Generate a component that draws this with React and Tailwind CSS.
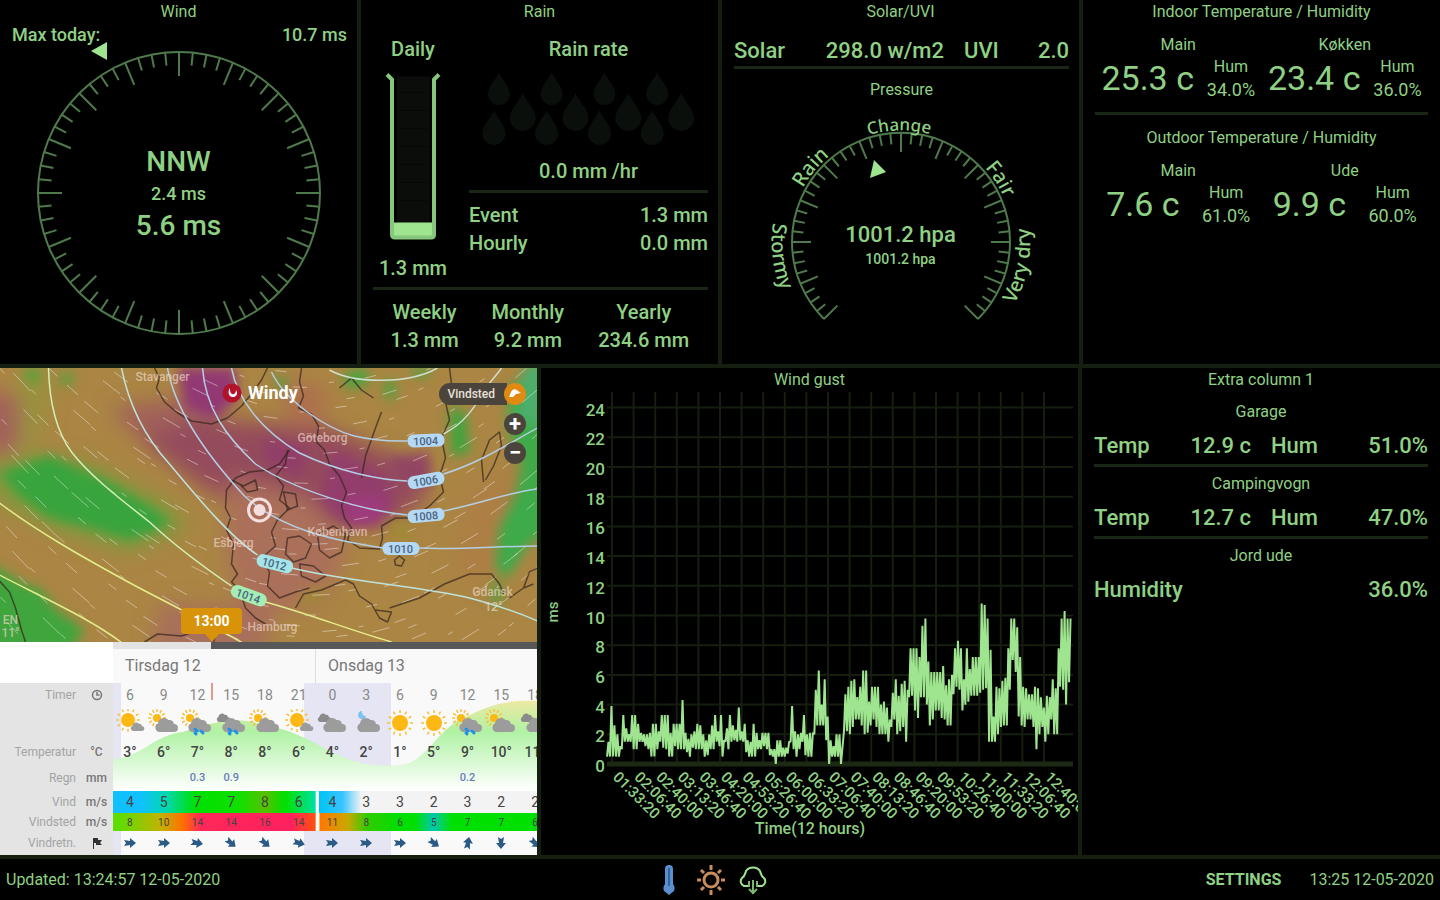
import { useId } from 'react'
import clsx from 'clsx'

const LINE = '#4f7a4b'
const BRIGHT = '#9fe48f'

const rainTotals = [
  { label: 'Weekly', value: '1.3 mm' },
  { label: 'Monthly', value: '9.2 mm' },
  { label: 'Yearly', value: '234.6 mm' },
]

const indoor = [
  { name: 'Main', temp: '25.3 c', hum: '34.0%' },
  { name: 'Køkken', temp: '23.4 c', hum: '36.0%' },
]

const outdoor = [
  { name: 'Main', temp: '7.6 c', hum: '61.0%' },
  { name: 'Ude', temp: '9.9 c', hum: '60.0%' },
]

// [low, high] gust in ms, one pair for every sample slot
const gusts = [
  [0.5, 1.5], [0.5, 3.9], [0.5, 2.6], [0.5, 2], [0.5, 1.2], [1, 3.3], [1.5, 2.4], [1.5, 2], [1.5, 3.3], [1, 3.3],
  [1, 2.7], [1.5, 2.1], [1.5, 2], [1.2, 2], [1, 2.1], [0.5, 2.7], [0.5, 2.7], [1, 2.2], [1.5, 3.3], [1.1, 3.3],
  [1, 3.3], [0.5, 2.1], [0.5, 2.7], [1.2, 2.7], [1, 2.7], [1, 4.3], [1, 2.1], [0.8, 1.7], [0.5, 2], [1.1, 2.2],
  [1, 2.7], [1, 2.6], [1, 2], [0.5, 1.6], [0.6, 2], [1, 2.6], [1, 3.3], [1.5, 2.2], [1.2, 3.3], [0.5, 1.6],
  [1.5, 2.4], [1, 3.3], [1.5, 2.6], [1.6, 2.3], [1.5, 3.8], [1.6, 2.2], [1.5, 2.7], [0.8, 1.6], [0.5, 1.5], [0.5, 2.7],
  [0.5, 2.1], [1, 1.6], [1, 2.1], [1.2, 2.1], [1, 2.1], [0.6, 1], [0.5, 1], [0, 1.6], [0.5, 1.6], [0.5, 1.1],
  [0.5, 1.1], [0.7, 1.5], [1.5, 3.9], [1, 2.2], [0.5, 2], [1, 2.1], [1.5, 3.3], [0.6, 2], [0.5, 2.1], [0.5, 2.1],
  [2, 5], [2.6, 6.3], [2.6, 4], [2.6, 5.7], [1.6, 3.2], [0, 1.6], [0.5, 1.2], [0.5, 2], [0.5, 2], [0, 1.1],
  [2.2, 4.7], [2.2, 5.2], [2, 5.6], [2.5, 5.7], [3, 4.5], [3, 5.2], [2.6, 6.3], [2, 6.3], [2.1, 4.2], [2.6, 5.2],
  [3, 5.2], [2.5, 5.2], [2, 4], [2, 4.2], [2, 3.8], [1.5, 3], [2.5, 4.8], [3, 5.7], [2, 4.6], [2.2, 5.4],
  [2.5, 5.6], [1.5, 5], [4.5, 7.8], [4.6, 7.8], [3.6, 7.8], [3.1, 7.2], [4.5, 9.3], [4.5, 9.8], [4, 6.9], [2.6, 6.2],
  [3, 6.2], [3.6, 6.2], [3.6, 6.2], [3.1, 6.6], [3, 5.3], [2.6, 5.7], [2.6, 6], [4.7, 7.8], [5.2, 8.3], [5, 7.8],
  [3.6, 5.7], [4, 7.8], [4.2, 6.4], [4.6, 7.2], [4.6, 7.2], [4.6, 7.2], [4.8, 10.8], [5, 10.7], [5.1, 9.8], [1.5, 7.7],
  [1.5, 3.2], [1.5, 5.2], [2, 5.1], [2.5, 5.6], [2.6, 5.8], [2.6, 7.8], [5, 9.8], [7, 9.8], [6.2, 9.2], [3.2, 7.2],
  [2.6, 5.2], [2.5, 5.1], [3, 4.7], [3, 4.7], [2.5, 5.2], [1, 5.1], [2, 4.5], [2.5, 3.8], [1.5, 4.6], [2, 4.5],
  [3, 5.7], [2, 5.1], [2, 7.8], [5.2, 9.8], [5, 10.3], [4, 9.8], [5.5, 9.8],
]

const forecast = [
  { hour: 6, icon: 'sunny', temp: '3°', rain: '', wind: 4, gust: 8, dir: 0 },
  { hour: 9, icon: 'partly', temp: '6°', rain: '', wind: 5, gust: 10, dir: 0 },
  { hour: 12, icon: 'showers', temp: '7°', rain: '0.3', wind: 7, gust: 14, dir: 10 },
  { hour: 15, icon: 'rain', temp: '8°', rain: '0.9', wind: 7, gust: 14, dir: 40 },
  { hour: 18, icon: 'partly', temp: '8°', rain: '', wind: 8, gust: 16, dir: 40 },
  { hour: 21, icon: 'sunny', temp: '6°', rain: '', wind: 6, gust: 14, dir: 15 },
  { hour: 0, icon: 'cloudy', temp: '4°', rain: '', wind: 4, gust: 11, dir: 0 },
  { hour: 3, icon: 'night', temp: '2°', rain: '', wind: 3, gust: 8, dir: 0 },
  { hour: 6, icon: 'sun', temp: '1°', rain: '', wind: 3, gust: 6, dir: 0 },
  { hour: 9, icon: 'sun', temp: '5°', rain: '', wind: 2, gust: 5, dir: 35 },
  { hour: 12, icon: 'showers', temp: '9°', rain: '0.2', wind: 3, gust: 7, dir: 280 },
  { hour: 15, icon: 'partly', temp: '10°', rain: '', wind: 2, gust: 7, dir: 90 },
  { hour: 18, icon: 'cloudy', temp: '11°', rain: '', wind: 2, gust: 6, dir: 45 },
]

function Panel({ title, className, children }) {
  return (
    <section className={clsx('min-w-0 overflow-hidden bg-black', className)}>
      <h2 className="text-center text-[16px] leading-6 font-normal">{title}</h2>
      {children}
    </section>
  )
}

function Rule({ className }) {
  return <hr className={clsx('h-[3px] border-0 bg-[#1a2716]', className)} />
}

function ticks(from, to, radius, minor, major) {
  const out = []
  for (let i = from; i <= to; i++) {
    const len = i % 4 === 0 ? major : minor
    out.push(<line key={i} y1={-radius} y2={-radius + len} transform={`rotate(${i * 5.625})`} />)
  }
  return out
}

function WindPanel() {
  return (
    <Panel title="Wind">
      <div className="flex justify-between pr-[10px] pl-3 text-[18px] leading-[22px]">
        <span>Max today:</span>
        <span>10.7 ms</span>
      </div>
      <div className="relative">
        <svg viewBox="-150 -147 300 296" className="mx-auto block h-[296px] w-[300px] overflow-visible" fill="none" stroke={LINE} strokeWidth="2">
          <circle r="141" />
          {ticks(0, 63, 141, 13, 24)}
          <path d="M-88 -142 L-72 -151 V-133 Z" fill={BRIGHT} stroke="none" />
        </svg>
        <div className="absolute inset-0 flex flex-col items-center justify-center leading-8">
          <span className="text-[28px]">NNW</span>
          <span className="text-[18px]">2.4 ms</span>
          <span className="text-[28px]">5.6 ms</span>
        </div>
      </div>
    </Panel>
  )
}

function Drop({ x, y, w, h }) {
  const r = w / 2
  const b = y + h - r
  return <path d={`M${x} ${y} C${x + 2} ${y + 6} ${x + r} ${b - 8} ${x + r} ${b} A${r} ${r} 0 0 1 ${x - r} ${b} C${x - r} ${b - 8} ${x - 2} ${y + 6} ${x} ${y} Z`} />
}

function RainPanel() {
  return (
    <Panel title="Rain" className="text-[20px]">
      <div className="pr-[10px] pl-3">
        <div className="flex gap-4 pt-3">
          <div className="w-20 shrink-0 text-center leading-[26px]">
            <div>Daily</div>
            <svg viewBox="0 0 80 192" className="block h-[193px] w-20">
              <rect x="24" y="14" width="33" height="150" fill="#0a0d0a" />
              <path d="M27 30H55M27 48H55M27 66H55M27 84H55M27 102H55M27 120H55M27 138H55" stroke="#060806" />
              <rect x="19" y="160" width="43" height="14" fill={BRIGHT} />
              <path d="M14 12 L19 17 V172 Q19 175 22 175 H58 Q61 175 61 172 V17 L66 12" fill="none" stroke="#86c77d" strokeWidth="4" />
            </svg>
            <div>1.3 mm</div>
          </div>
          <div className="flex-1">
            <div className="text-center leading-[26px]">Rain rate</div>
            <svg viewBox="0 0 240 96" className="block h-24 w-full" fill="#0b0f0b">
              {[0, 1, 2, 3].map((i) => (
                <g key={i}>
                  <Drop x={30 + i * 53} y={10} w={22} h={33} />
                  <Drop x={54 + i * 53} y={31} w={26} h={38} />
                  <Drop x={25 + i * 53} y={48} w={23} h={35} />
                </g>
              ))}
            </svg>
            <div className="text-center leading-[26px]">0.0 mm /hr</div>
            <Rule className="mt-[6px] mb-2" />
            <div className="flex justify-between leading-7">
              <span>Event</span>
              <span>1.3 mm</span>
            </div>
            <div className="flex justify-between leading-7">
              <span>Hourly</span>
              <span>0.0 mm</span>
            </div>
          </div>
        </div>
        <Rule className="mt-[6px] mb-2" />
        <table className="w-full text-center leading-7">
          <thead>
            <tr>
              {rainTotals.map((t) => (
                <th key={t.label} className="p-0 font-medium">{t.label}</th>
              ))}
            </tr>
          </thead>
          <tbody>
            <tr>
              {rainTotals.map((t) => (
                <td key={t.label} className="px-3">{t.value}</td>
              ))}
            </tr>
          </tbody>
        </table>
      </div>
    </Panel>
  )
}

function SolarPanel() {
  const id = useId()
  return (
    <Panel title="Solar/UVI">
      <div className="pt-3 pr-[10px] pl-3">
        <div className="grid grid-cols-[2fr_1fr] gap-5 text-[22px] leading-[30px]">
          <div className="flex justify-between"><span>Solar</span><span>298.0 w/m2</span></div>
          <div className="flex justify-between"><span>UVI</span><span>2.0</span></div>
        </div>
        <Rule />
        <h3 className="pt-[9px] text-center text-[16px] leading-6 font-normal">Pressure</h3>
      </div>
      <div className="relative">
        <svg viewBox="-150 -140 300 240" className="mx-auto block h-[240px] w-[300px] overflow-visible">
          <defs>
            <path id={`${id}change`} d="M-79 -79 A112 112 0 0 1 79 -79" />
            <path id={`${id}upper`} d="M-112 0 A112 112 0 0 1 112 0" />
            <path id={`${id}left`} d="M-112 -65 A130 130 0 0 0 -65 112" />
            <path id={`${id}right`} d="M65 112 A130 130 0 0 0 112 -65" />
          </defs>
          <g fill="none" stroke={LINE} strokeWidth="2">
            <path d="M-77 77 A109 109 0 1 1 77 77" />
            {ticks(-24, 24, 109, 11, 19)}
          </g>
          <path d="M-27 -82 L-15 -70 L-31 -64 Z" fill={BRIGHT} />
          <g fill="#8fd184" fontFamily="Noto Sans" fontSize="20" textAnchor="middle">
            <text fontSize="17"><textPath href={`#${id}change`} startOffset="49%">Change</textPath></text>
            <text><textPath href={`#${id}upper`} startOffset="22%">Rain</textPath></text>
            <text><textPath href={`#${id}upper`} startOffset="82%">Fair</textPath></text>
            <text><textPath href={`#${id}left`} startOffset="41%">Stormy</textPath></text>
            <text><textPath href={`#${id}right`} startOffset="54%">Very dry</textPath></text>
          </g>
        </svg>
        <div className="absolute inset-0 flex flex-col items-center justify-center pt-[50px] leading-6">
          <span className="text-[22px]">1001.2 hpa</span>
          <span className="text-[14px]">1001.2 hpa</span>
        </div>
      </div>
    </Panel>
  )
}

function Sensors({ items }) {
  return (
    <div className="grid grid-cols-2 px-3 pt-[11px]">
      {items.map((s) => (
        <div key={s.name}>
          <h3 className="text-center text-[16px] leading-5 font-normal">{s.name}</h3>
          <div className="flex items-center justify-around">
            <span className="text-[34px] leading-[46px] font-normal">{s.temp}</span>
            <div className="text-center leading-[23px]">
              <div className="text-[16px] font-normal">Hum</div>
              <div className="text-[18px] font-normal">{s.hum}</div>
            </div>
          </div>
        </div>
      ))}
    </div>
  )
}

function TemperaturePanel() {
  return (
    <Panel title="Indoor Temperature / Humidity">
      <Sensors items={indoor} />
      <Rule className="mx-3 my-[11px]" />
      <h2 className="text-center text-[16px] leading-6 font-normal">Outdoor Temperature / Humidity</h2>
      <Sensors items={outdoor} />
    </Panel>
  )
}

function ExtraRow({ name, children, last }) {
  return (
    <div className="pt-[5px]">
      <h3 className="text-center text-[16px] leading-6 font-normal">{name}</h3>
      <div className="mb-[2px] grid auto-cols-fr grid-flow-col gap-5 pt-[6px] text-[22px] leading-8">{children}</div>
      {!last && <Rule />}
    </div>
  )
}

function Reading({ label, value }) {
  return (
    <div className="flex justify-between">
      <span>{label}</span>
      <span>{value}</span>
    </div>
  )
}

function ExtraPanel() {
  return (
    <Panel title="Extra column 1">
      <div className="px-3 pt-[3px]">
        <ExtraRow name="Garage">
          <Reading label="Temp" value="12.9 c" />
          <Reading label="Hum" value="51.0%" />
        </ExtraRow>
        <ExtraRow name="Campingvogn">
          <Reading label="Temp" value="12.7 c" />
          <Reading label="Hum" value="47.0%" />
        </ExtraRow>
        <ExtraRow name="Jord ude" last>
          <Reading label="Humidity" value="36.0%" />
        </ExtraRow>
      </div>
    </Panel>
  )
}

function clock(seconds) {
  const parts = [Math.floor(seconds / 3600), Math.floor(seconds / 60) % 60, seconds % 60]
  return parts.map((n) => String(n).padStart(2, '0')).join(':')
}

function GustPanel() {
  const y = (v) => 372 - v * 14.85
  const step = 465 / gusts.length
  const points = gusts.map(([lo, hi], i) => `${66 + i * step},${y(lo)} ${66 + (i + 0.5) * step},${y(hi)}`).join(' ')
  const cols = Array.from({ length: 21 }, (_, i) => i)
  const rows = Array.from({ length: 13 }, (_, i) => i * 2)

  return (
    <Panel title="Wind gust">
      <svg viewBox="0 0 537 460" className="block w-full" fill="#8fd184" fontSize="16">
        <g stroke="#151e0f" strokeWidth="2">
          {cols.map((i) => (
            <line key={i} x1={71 + i * 21.6} x2={71 + i * 21.6} y1="0" y2="372" />
          ))}
          {rows.slice(1).map((v) => (
            <line key={v} x1="66" x2="532" y1={y(v)} y2={y(v)} />
          ))}
        </g>
        <line x1="66" x2="532" y1="372" y2="372" stroke="#1c2914" strokeWidth="5" />
        {rows.map((v) => (
          <text key={v} x="64" y={y(v) + 8} textAnchor="end" fontSize="17">{v}</text>
        ))}
        {cols.map((i) => (
          <text key={i} transform={`translate(${71 + i * 21.6} 386) rotate(45)`} fontSize="15">{clock(5600 + i * 2000)}</text>
        ))}
        <polyline points={points} fill="none" stroke={BRIGHT} strokeWidth="2" strokeLinejoin="bevel" />
        <text transform="translate(17 220) rotate(-90)" textAnchor="middle" fontSize="15">ms</text>
        <text x="269" y="442" textAnchor="middle">Time(12 hours)</text>
      </svg>
    </Panel>
  )
}

const isobars = [
  { color: '#d3f0b4', d: 'M49 0 C50 40 58 65 72 84 C92 110 130 138 150 154 C180 182 210 203 232 218' },
  { color: '#e3ec8c', d: 'M266 234 C310 246 350 262 392 274' },
  { color: '#e3ec8c', d: 'M0 135 C40 165 85 190 125 212 C150 226 200 250 245 276' },
  { color: '#e3ec8c', d: 'M0 207 C40 228 90 250 124 276' },
  { color: '#bfe3da', d: 'M122 0 C130 40 148 72 170 96 C200 132 230 168 258 187' },
  { color: '#bfe3da', d: 'M292 200 C350 214 420 218 470 230 C500 238 520 245 538 253' },
  { color: '#b4cfe4', d: 'M168 0 C176 45 210 90 245 128 C280 160 330 172 384 180' },
  { color: '#b4cfe4', d: 'M418 180 C460 182 500 178 538 178' },
  { color: '#b4cfe4', d: 'M203 0 C206 40 226 68 256 96 C295 122 360 142 408 147' },
  { color: '#b4cfe4', d: 'M444 143 C480 136 510 124 538 121' },
  { color: '#b4cfe4', d: 'M232 0 C238 32 262 62 300 85 C340 104 380 112 408 113' },
  { color: '#b4cfe4', d: 'M444 106 C480 95 510 75 538 60' },
  { color: '#b4cfe4', d: 'M272 4 C285 32 325 60 355 68 C380 74 395 73 408 73' },
  { color: '#cfe0d0', d: 'M444 66 C465 55 475 40 485 22 C492 12 498 6 502 0' },
  { color: '#cfe0d0', d: 'M330 2 C355 16 410 16 438 0' },
]

const isobarLabels = [
  { x: 426, y: 72, r: -2, text: '1004' },
  { x: 426, y: 112, r: -10, text: '1006' },
  { x: 426, y: 147, r: -5, text: '1008' },
  { x: 401, y: 180, r: 0, text: '1010' },
  { x: 275, y: 195, r: 14, text: '1012', fill: '#a5e5e8' },
  { x: 249, y: 227, r: 20, text: '1014', fill: '#a5edb4' },
]

const coasts = [
  'M155 0 L160 10 157 20 165 34 178 45 192 53 212 56 228 50 242 38 252 26 262 12 268 0',
  'M302 0 L300 14 304 28 299 40 312 46 319 58 317 74 325 82 330 96 340 108 347 124 342 138 345 150 352 160 348 172 360 180 380 181 383 170 382 158 396 150 412 150 430 138 444 124 440 108 446 90 442 70 450 52 446 34 452 16 450 0',
  'M290 82 L280 96 268 102 250 104 236 110 227 122 226 140 231 150 227 162 234 176 232 196 238 206 232 214 240 222 246 240 256 250 266 256',
  'M288 82 L286 96 276 108 284 118 280 132 290 140 278 152 272 164 276 178 262 190 270 204 268 218 280 230 296 224 310 220',
  'M232 112 L244 118 256 112 258 122 248 124 240 116',
  'M288 170 L300 168 312 176 306 190 294 194 286 186 Z',
  'M318 166 L334 158 346 166 342 184 330 190 320 182 Z',
  'M300 196 L314 198 326 208 316 214 302 208 Z',
  'M284 124 L296 126 298 138 288 142 Z',
  'M296 240 L304 226 322 222 346 212 354 216 360 228 372 236 380 250 388 254 392 244 376 242',
  'M390 240 L420 230 445 216 470 206 492 206 500 216 504 226',
  'M510 230 L524 220 530 204 538 200 M524 220 L534 216',
  'M484 114 L482 92 490 72 500 64 502 78 494 98 486 112',
  'M362 110 L366 88 376 60 382 44 M340 20 L352 10 362 22 374 30',
  'M145 274 L158 266 182 268 200 262 216 268 214 274',
  'M0 213 L10 224 16 240 22 262 26 274',
  'M395 192 L400 188 405 192 402 198 396 197 Z',
]

const places = [
  { x: 163, y: 13, text: 'Stavanger' },
  { x: 323, y: 74, text: 'Göteborg' },
  { x: 338, y: 168, text: 'København' },
  { x: 234, y: 179, text: 'Esbjerg' },
  { x: 273, y: 263, text: 'Hamburg' },
  { x: 493, y: 228, text: 'Gdańsk' },
  { x: 494, y: 243, text: '12°' },
  { x: 11, y: 256, text: 'EN' },
  { x: 11, y: 269, text: '11°' },
]

// wind particles drifting along the flow
const streaks = Array.from({ length: 230 }, (_, i) => {
  const x = (i * 137.5) % 538
  const y = (i * 71.3 + (i % 7) * 19) % 274
  const slope = x < 250 ? 1.1 - x / 320 : 0.2 - (x - 250) / 260
  const len = 5 + (i % 5) * 3
  return `M${x.toFixed(1)} ${y.toFixed(1)} l${len} ${(len * slope).toFixed(1)}`
}).join(' ')

function WindMap() {
  const id = useId()
  return (
    <svg viewBox="0 0 538 274" preserveAspectRatio="xMidYMid slice" className="block h-[274px] w-full">
      <defs>
        <filter id={`${id}soft`} x="-50%" y="-50%" width="200%" height="200%">
          <feGaussianBlur stdDeviation="10" />
        </filter>
        <filter id={`${id}tight`} x="-50%" y="-50%" width="200%" height="200%">
          <feGaussianBlur stdDeviation="6" />
        </filter>
      </defs>
      <rect width="538" height="274" fill="#aa8543" />
      <g filter={`url(#${id}soft)`}>
        <path d="M-20 20 L20 30 28 70 0 90 -20 80 Z" fill="#a2605a" />
        <path d="M110 40 L180 30 240 60 250 130 200 115 150 80 Z" fill="#a0605a" />
        <path d="M140 70 L200 50 330 60 400 90 430 130 380 160 250 150 190 110 Z" fill="#944b5c" />
        <path d="M230 110 L310 130 350 180 320 240 240 240 225 170 Z" fill="#ab705a" />
        <path d="M160 235 L280 240 260 290 150 290 Z" fill="#a8705a" />
        <path d="M280 10 L330 20 320 60 290 60 Z" fill="#ad6f4e" />
        <path d="M-10 95 L40 85 90 95 170 135 190 160 130 185 60 165 -10 130 Z" fill="#83983c" />
        <path d="M20 0 L50 0 45 60 20 90 Z" fill="#99923d" />
        <path d="M470 120 L538 90 538 160 490 220 450 200 Z" fill="#ad7f45" />
      </g>
      <g filter={`url(#${id}tight)`}>
        <path d="M0 105 L50 88 105 112 150 138 172 155 150 165 130 172 90 160 50 150 20 128 Z" fill="#37a43c" />
        <path d="M-10 195 L22 215 42 222 55 240 85 262 70 285 -10 285 Z" fill="#3fa53c" />
        <path d="M178 0 L236 0 238 30 215 52 185 40 Z" fill="#923773" />
        <path d="M335 82 L388 110 395 140 350 160 320 130 Z" fill="#933c6c" />
        <path d="M345 128 L388 130 380 155 352 158 Z" fill="#9e3a7e" />
        <path d="M262 70 L310 80 300 110 268 95 Z" fill="#913d69" />
        <path d="M388 90 L430 84 432 120 400 118 Z" fill="#914464" />
        <path d="M545 -10 L510 20 508 60 522 95 515 130 500 160 496 200 508 210 530 175 545 170 Z" fill="#3cab4a" />
        <path d="M545 -10 L524 0 516 50 545 60 Z" fill="#4cae6c" />
        <path d="M450 38 L466 45 470 85 452 88 Z" fill="#3da53c" />
        <path d="M60 5 L75 5 72 18 60 16 Z M25 0 H40 V15 H28 Z" fill="#5ba03a" />
        <path d="M344 6 L368 0 368 18 346 20 Z M384 14 L396 12 394 34 386 28 Z M412 0 H430 V8 H412 Z" fill="#42a63c" />
        <path d="M276 8 L288 12 286 22 276 16 Z M492 214 L502 216 500 238 494 238 Z" fill="#42a63c" />
        <path d="M388 155 L410 152 412 172 392 172 Z M300 225 L330 218 320 236 300 238 Z" fill="#a08a35" />
      </g>
      <path d={streaks} stroke="#fff" strokeOpacity="0.42" fill="none" />
      <g fill="none" stroke="#35241d" strokeOpacity="0.7" strokeWidth="1.5" strokeLinejoin="round">
        {coasts.map((d) => <path key={d} d={d} />)}
      </g>
      <g fill="none" strokeWidth="1.5">
        {isobars.map((b) => <path key={b.d} d={b.d} stroke={b.color} />)}
      </g>
      <g fill="#f3dcd2" fillOpacity="0.65" fontSize="12" textAnchor="middle">
        {places.map((p) => <text key={p.text} x={p.x} y={p.y}>{p.text}</text>)}
      </g>
      {isobarLabels.map((l) => (
        <g key={l.text} transform={`translate(${l.x} ${l.y}) rotate(${l.r})`}>
          <rect x="-18" y="-6" width="37" height="13" rx="6" fill={l.fill || '#b5d8f5'} />
          <text y="5" fontSize="11" textAnchor="middle" fill="#4a6480">{l.text}</text>
        </g>
      ))}
      <circle cx="260" cy="142" r="11" fill="none" stroke="#f4dede" strokeWidth="3" />
      <circle cx="260" cy="142" r="6" fill="#f4dede" />
    </svg>
  )
}

function Sun({ x, y, r }) {
  const rays = Array.from({ length: 12 }, (_, i) => i * 30)
  return (
    <g transform={`translate(${x} ${y})`}>
      <circle r={r} fill="#fdb813" />
      {rays.map((a) => (
        <line key={a} y1={-r - 2} y2={-r - 5} transform={`rotate(${a})`} stroke="#fbbf3c" strokeWidth="1.5" />
      ))}
    </g>
  )
}

function Cloud({ x, y, s = 1, fill = '#9c9c9c' }) {
  return (
    <path
      transform={`translate(${x} ${y}) scale(${s})`}
      d="M5 15 A4.5 4.5 0 0 1 4 6.500 A6 6 0 0 1 14.500 3 A5 5 0 0 1 20 7 A4 4 0 0 1 20 15 Z"
      fill={fill}
    />
  )
}

function WeatherIcon({ kind }) {
  const wet = kind === 'showers' || kind === 'rain'
  return (
    <svg viewBox="0 0 32 28" className="mx-auto block h-7 w-8">
      {kind === 'sun' && <Sun x={16} y={14} r={8} />}
      {kind === 'sunny' && <><Sun x={14} y={11} r={7} /><Cloud x={16} y={13} s={0.6} /></>}
      {(kind === 'partly' || kind === 'showers') && <Sun x={9} y={9} r={4} />}
      {(kind === 'cloudy' || kind === 'rain') && <Cloud x={1} y={4} s={0.6} fill="#8b8b8b" />}
      {kind === 'night' && <path d="M12 2 A4 4 0 1 0 16 7 A4 4 0 0 1 12 2 Z" fill="#7cc4ee" />}
      {kind !== 'sun' && kind !== 'sunny' && <Cloud x={6} y={8} />}
      {wet && <path d="M14 20 l2 2 M20 22 l2 2 M14 24 l1 1" stroke="#1e90e8" strokeWidth="3" strokeLinecap="round" />}
    </svg>
  )
}

function Row({ label, unit, className, cell, render }) {
  return (
    <tr className={className}>
      <th scope="row" className="bg-[#e4e4e4] p-0 font-normal text-[#a3a3a3]">
        <div className="flex items-center text-[12px]">
          <span className="w-[76px] text-right">{label}</span>
          <span className="flex w-[37px] justify-center pl-1 font-medium text-[#777]">{unit}</span>
        </div>
      </th>
      {forecast.map((f, i) => (
        <td key={i} className={clsx('p-0 text-center', cell)}>{render(f)}</td>
      ))}
    </tr>
  )
}

function Forecast() {
  const id = useId()
  return (
    <div className="relative flex-1 overflow-hidden bg-[#f9f9f9] text-[#444]">
      <div className="flex h-[7px]">
        <div className="w-[113px] bg-white" />
        <div className="w-[98px] bg-[#e3e3e3]" />
        <div className="flex-1 bg-[#58585a]" />
      </div>
      <svg viewBox="0 0 425 172" className="absolute top-[41px] left-[113px] h-[172px] w-[425px]" fill="none">
        <defs>
          <linearGradient id={`${id}t`} x1="0" y1="18" x2="0" y2="106" gradientUnits="userSpaceOnUse">
            <stop offset="0" stopColor="#ece9a2" />
            <stop offset="0.35" stopColor="#b0f2a4" />
            <stop offset="1" stopColor="#fdfffd" />
          </linearGradient>
        </defs>
        <path d="M0 0H8V172H0ZM191 0H278V172H191Z" fill="#e5e5f3" />
        <path d="M0 76 C30 74 40 52 70 49 C95 40 120 34 145 40 C185 48 200 60 225 72 C250 84 280 85 297 80 C320 68 330 40 357 32 C380 20 400 17 425 18 V109 H0 Z" fill={`url(#${id}t)`} />
        <path d="M99 0V17" stroke="#d9534f" strokeOpacity="0.6" strokeWidth="2" />
      </svg>
      <table className="relative w-[552px] table-fixed border-collapse text-[14px]">
        <colgroup>
          <col className="w-[113px]" />
          {forecast.map((f, i) => <col key={i} />)}
        </colgroup>
        <thead>
          <tr className="h-[34px] text-left text-[16px] text-[#777]">
            <td className="bg-white p-0" />
            <th colSpan="6" scope="colgroup" className="border-r border-[#ddd] p-0 pl-3 font-normal">Tirsdag 12</th>
            <th colSpan="7" scope="colgroup" className="p-0 pl-3 font-normal">Onsdag 13</th>
          </tr>
        </thead>
        <tbody>
          <Row
            label="Timer"
            unit={
              <svg viewBox="0 0 12 12" className="size-3" fill="none" stroke="#777" strokeWidth="1.5"><circle cx="6" cy="6" r="4.500" /><path d="M6 3V6H8.500" /></svg>
            }
            className="h-6 font-normal text-[#888]"
            render={(f) => f.hour}
          />
          <Row className="h-8" render={(f) => <WeatherIcon kind={f.icon} />} />
          <Row label="Temperatur" unit="°C" className="h-[26px]" render={(f) => f.temp} />
          <Row label="Regn" unit="mm" className="h-[26px]" cell="text-[11px] text-[#6a7bbb]" render={(f) => f.rain} />
          <Row
            label="Vind"
            unit="m/s"
            className="h-[22px] bg-[linear-gradient(90deg,#10c0ff_120px,#10c0ff_140px,#00d8b0_166px,#00e000_196px,#10e000_240px,#58c000_265px,#00e000_285px,#00e0a0_315px,#fff_316px,#fff_318px,#00c4f4_319px,#38c4ff_342px,#f3f3f3_362px)]"
            cell="font-normal"
            render={(f) => f.wind}
          />
          <Row
            label="Vindsted"
            unit="m/s"
            className="h-[17px] bg-[linear-gradient(90deg,#60dc00_120px,#c0b400_160px,#ff7000_182px,#ff2858_200px,#ff2060_290px,#ff5010_315px,#fff_316px,#fff_318px,#ff7800_320px,#c8a800_348px,#30cc00_368px,#00e000_400px,#00e000_415px,#00c8b0_433px,#00e000_452px)]"
            cell="text-[10px] leading-[17px] font-normal"
            render={(f) => f.gust}
          />
          <Row
            label="Vindretn."
            unit={
              <svg viewBox="0 0 12 12" className="size-3"><path d="M2 1H7V3H11L9 6L11 8H5V6H3V12H2Z" fill="#333" /></svg>
            }
            className="h-6"
            render={(f) => (
              <svg viewBox="0 0 14 14" className="mx-auto block size-[14px]">
                <path d="M1 4 L3 7 L1 10 L7 9 V12 L13 7 L7 2 V5 Z" transform={`rotate(${f.dir} 7 7)`} fill="#2b5a85" />
              </svg>
            )}
          />
        </tbody>
      </table>
    </div>
  )
}

function MapPanel() {
  return (
    <section className="flex min-w-0 flex-col overflow-hidden bg-black">
      <div className="relative">
        <WindMap />
        <a href="#windy" className="absolute top-[14px] left-[222px] flex items-center gap-[6px] text-[18px] leading-[22px] font-bold text-white">
          <svg viewBox="0 0 20 20" className="size-5">
            <circle cx="10" cy="10" r="9.500" fill="#b3122b" />
            <path d="M8 5 C5 9 7 15 12 14 C15 13 16 10 14 7 C14 10 12 12 10 11 C8 10 8 8 8 5 Z" fill="#fff" />
          </svg>
          Windy
        </a>
        <button type="button" className="absolute top-[14px] right-[10px] flex items-center text-[12px] text-[#e6e0da]">
          <span className="-mr-1 rounded-l-full bg-[#4b443c] pr-3 pl-2 leading-[22px]">Vindsted</span>
          <svg viewBox="0 0 24 24" className="size-6">
            <circle cx="12" cy="12" r="11" fill="#e08a12" />
            <path d="M6 15 C8 12 7 8 12 7 L18 11 L13 12 L10 15 Z" fill="#fff" />
          </svg>
        </button>
        <div className="absolute top-[45px] right-[11px] flex flex-col gap-[7px]">
          {['+', '−'].map((sign) => (
            <button key={sign} type="button" className="size-[22px] rounded-full bg-[#4b443c] text-[22px] leading-[22px] font-bold text-white">{sign}</button>
          ))}
        </div>
        <div className="absolute bottom-0 left-[181px] flex flex-col items-center">
          <span className="w-[61px] rounded-[4px] bg-[#d8930b] text-center text-[14px] leading-[26px] font-bold text-white">13:00</span>
          <span className="h-0 w-0 border-x-[7px] border-t-[8px] border-x-transparent border-t-[#d8930b]" />
        </div>
      </div>
      <Forecast />
    </section>
  )
}

function Footer() {
  return (
    <footer className="flex h-[41px] items-center justify-between bg-black px-[6px] text-[16px] font-normal">
      <span>Updated: 13:24:57 12-05-2020</span>
      <div className="flex items-center gap-3 pr-1">
        <svg viewBox="0 0 30 32" className="h-8 w-[30px]" fill="#5b8fd0">
          <path d="M11 5 A4 4 0 0 1 19 5 V20 A7 7 0 0 1 20 27 L15 31 L10 27 A7 7 0 0 1 11 20 Z" />
          <path d="M15 4V22" stroke="#34619b" strokeWidth="2" />
        </svg>
        <svg viewBox="0 0 30 32" className="h-8 w-[30px]" fill="none" stroke="#c98d5c" strokeWidth="3">
          <circle cx="15" cy="16" r="7" />
          <path d="M15 1V6M15 26V31M1 16H5M25 16H29M5 6L8 9M22 23L25 26M5 26L8 23M22 9L25 6" />
        </svg>
        <svg viewBox="0 0 30 32" className="h-8 w-[30px]" fill="none" stroke={BRIGHT} strokeWidth="2">
          <path d="M10 22 H6 A5 5 0 0 1 4 14 C7 12 7 10 8 7 A8 7 0 0 1 22 7 C23 10 23 12 26 14 A5 5 0 0 1 24 22 H20" />
          <path d="M11 17 V23 M15 16 V30 M19 17 V23 M11 25 L15 29 L19 25" strokeOpacity="0.8" />
        </svg>
      </div>
      <div className="flex gap-7">
        <button type="button" className="font-bold">SETTINGS</button>
        <span>13:25 12-05-2020</span>
      </div>
    </footer>
  )
}

export default function App() {
  return (
    <div className="grid min-h-screen grid-rows-[auto_1fr_auto] gap-1 bg-[#141f12] font-['Roboto',sans-serif] font-medium text-[#8fd184]">
      <div className="grid min-h-[364px] grid-cols-4 gap-1">
        <WindPanel />
        <RainPanel />
        <SolarPanel />
        <TemperaturePanel />
      </div>
      <main className="grid grid-cols-[3fr_3fr_2fr] gap-1">
        <MapPanel />
        <GustPanel />
        <ExtraPanel />
      </main>
      <Footer />
    </div>
  )
}
